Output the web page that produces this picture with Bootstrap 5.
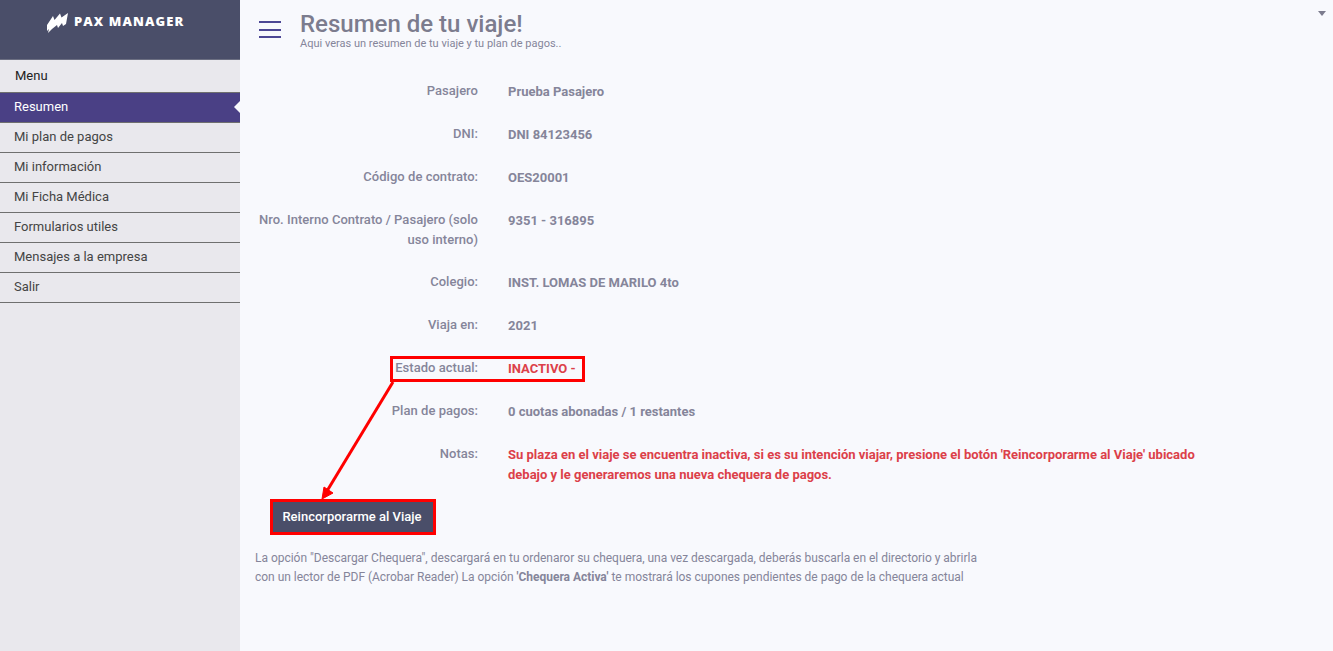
<!DOCTYPE html>
<html lang="es">
  <head>
    <meta charset="UTF-8" />
    <meta name="viewport" content="width=device-width, initial-scale=1" />
    <title>Pax Manager</title>
    <link href="https://cdn.jsdelivr.net/npm/bootstrap@5.3.2/dist/css/bootstrap.min.css" rel="stylesheet" />
    <style>
      html, body { height: 100%; overflow: hidden; }
      body { font-family: Roboto, "Liberation Sans", sans-serif; font-size: 13px; background: #f8f9fd; color: #85859a; }
      .app-shell { height: 651px; position: relative; }
      .side-panel { width: 240px; background: #e9e8ed; flex-shrink: 0; }
      .brand-bar { height: 60px; background: #4a4e69; border-bottom: 1px solid #6c6f82; padding: 11px 0 0 46px; color: #fff; }
      .brand-name { font-family: "Open Sans", sans-serif; font-weight: 800; font-size: 13px; letter-spacing: 1.1px; margin-left: 6px; line-height: 20px; }
      .menu-title { height: 33px; line-height: 32px; padding-left: 15px; color: #222; font-size: 13px; border-bottom: 1px solid #6f6f6f; }
      .menu-link { display: block; height: 30px; line-height: 28px; padding-left: 14px; color: #444; font-size: 13px; text-decoration: none; border-bottom: 1px solid #6f6f6f; position: relative; }
      .menu-link.current { background: #4a4085; color: #fff; }
      .menu-link.current::after { content: ""; position: absolute; right: 0; top: 8px; border: 6px solid transparent; border-right-color: #f8f9fd; border-left: 0; }
      .main-pane { padding: 11px 0 0 15px; }
      .burger { width: 22px; margin: 10px 19px 0 4px; flex-shrink: 0; }
      .burger i { display: block; height: 2px; background: #4c4795; margin-bottom: 5.5px; }
      .page-title { font-size: 24px; font-weight: 500; color: #7c7c8e; line-height: 27px; margin: 0; }
      .page-sub { font-size: 11px; color: #85859a; line-height: 11px; }
      .info-list { margin-top: 32px; width: 955px; }
      .info-row { margin-bottom: 22px; font-weight: 500; line-height: 20px; color: #85859a; }
      .info-label { width: 223px; text-align: right; flex-shrink: 0; margin-right: 30px; letter-spacing: .03px; }
      .info-value { margin-top: .5px; line-height: 20.5px; font-weight: 700; }
      .txt-alert { color: #dc4049; }
      .btn-rejoin { background: #4a4e69; color: #fff; font-size: 13px; font-weight: 500; border: 0; border-radius: 0; width: 160px; height: 30px; margin: -5.5px 0 0 18px; padding: 0 2px 0 0; }
      .help-text { font-size: 12px; line-height: 19.5px; width: 740px; margin-top: 16.5px; letter-spacing: -.02px; }
      .help-text strong { font-weight: 700; }
      .corner-caret { position: absolute; right: 7px; top: 11px; border: 4px solid transparent; border-top: 5px solid #7c7c8e; border-bottom: 0; }
      .markup-layer { position: absolute; left: 0; top: 0; pointer-events: none; }
    </style>
  </head>
  <body>
    <div class="app-shell d-flex">
      <aside class="side-panel">
        <div class="brand-bar d-flex align-items-start">
          <svg width="22" height="23" viewBox="0 0 22 23" fill="#fff">
            <polygon points="1,14 7,5 8.5,9 14,2.5 15.5,6.5 22,2 20,13 17,15 16,12 12,17 11,14 6,18 2,22 3,18 1,20" />
          </svg>
          <span class="brand-name">PAX MANAGER</span>
        </div>
        <div class="menu-title">Menu</div>
        <nav>
          <a class="menu-link current" href="#">Resumen</a>
          <a class="menu-link" href="#">Mi plan de pagos</a>
          <a class="menu-link" href="#">Mi información</a>
          <a class="menu-link" href="#">Mi Ficha Médica</a>
          <a class="menu-link" href="#">Formularios utiles</a>
          <a class="menu-link" href="#">Mensajes a la empresa</a>
          <a class="menu-link" href="#">Salir</a>
        </nav>
      </aside>

      <main class="main-pane flex-grow-1">
        <div class="d-flex">
          <div class="burger"><i></i><i></i><i></i></div>
          <div>
            <h1 class="page-title">Resumen de tu viaje!</h1>
            <div class="page-sub">Aqui veras un resumen de tu viaje y tu plan de pagos..</div>
          </div>
        </div>

        <div class="info-list">
          <div class="info-row d-flex"><div class="info-label">Pasajero</div><div class="info-value">Prueba Pasajero</div></div>
          <div class="info-row d-flex"><div class="info-label">DNI:</div><div class="info-value">DNI 84123456</div></div>
          <div class="info-row d-flex"><div class="info-label">Código de contrato:</div><div class="info-value">OES20001</div></div>
          <div class="info-row d-flex"><div class="info-label">Nro. Interno Contrato / Pasajero (solo uso interno)</div><div class="info-value">9351 - 316895</div></div>
          <div class="info-row d-flex"><div class="info-label">Colegio:</div><div class="info-value">INST. LOMAS DE MARILO 4to</div></div>
          <div class="info-row d-flex"><div class="info-label">Viaja en:</div><div class="info-value">2021</div></div>
          <div class="info-row d-flex"><div class="info-label">Estado actual:</div><div class="info-value txt-alert">INACTIVO -</div></div>
          <div class="info-row d-flex"><div class="info-label">Plan de pagos:</div><div class="info-value">0 cuotas abonadas / 1 restantes</div></div>
          <div class="info-row d-flex"><div class="info-label">Notas:</div><div class="info-value txt-alert">Su plaza en el viaje se encuentra inactiva, si es su intención viajar, presione el botón 'Reincorporarme al Viaje' ubicado debajo y le generaremos una nueva chequera de pagos.</div></div>
        </div>

        <button class="btn btn-rejoin" type="button">Reincorporarme al Viaje</button>
        <p class="help-text">La opción "Descargar Chequera", descargará en tu ordenaror su chequera, una vez descargada, deberás buscarla en el directorio y abrirla con un lector de PDF (Acrobar Reader) La opción <strong>'Chequera Activa'</strong> te mostrará los cupones pendientes de pago de la chequera actual</p>
      </main>

      <span class="corner-caret"></span>

      <!-- red annotations drawn over the page -->
      <svg class="markup-layer" width="1333" height="651" fill="none" stroke="#f00" stroke-width="3">
        <rect x="391.5" y="357.5" width="192" height="23" />
        <rect x="271.5" y="500.5" width="163" height="33" />
        <line x1="393" y1="382" x2="327" y2="491" />
        <polygon points="322,499 324,487 333,493" fill="#f00" stroke-width="1" />
      </svg>
    </div>
    <script src="https://cdn.jsdelivr.net/npm/bootstrap@5.3.2/dist/js/bootstrap.bundle.min.js"></script>
  </body>
</html>
